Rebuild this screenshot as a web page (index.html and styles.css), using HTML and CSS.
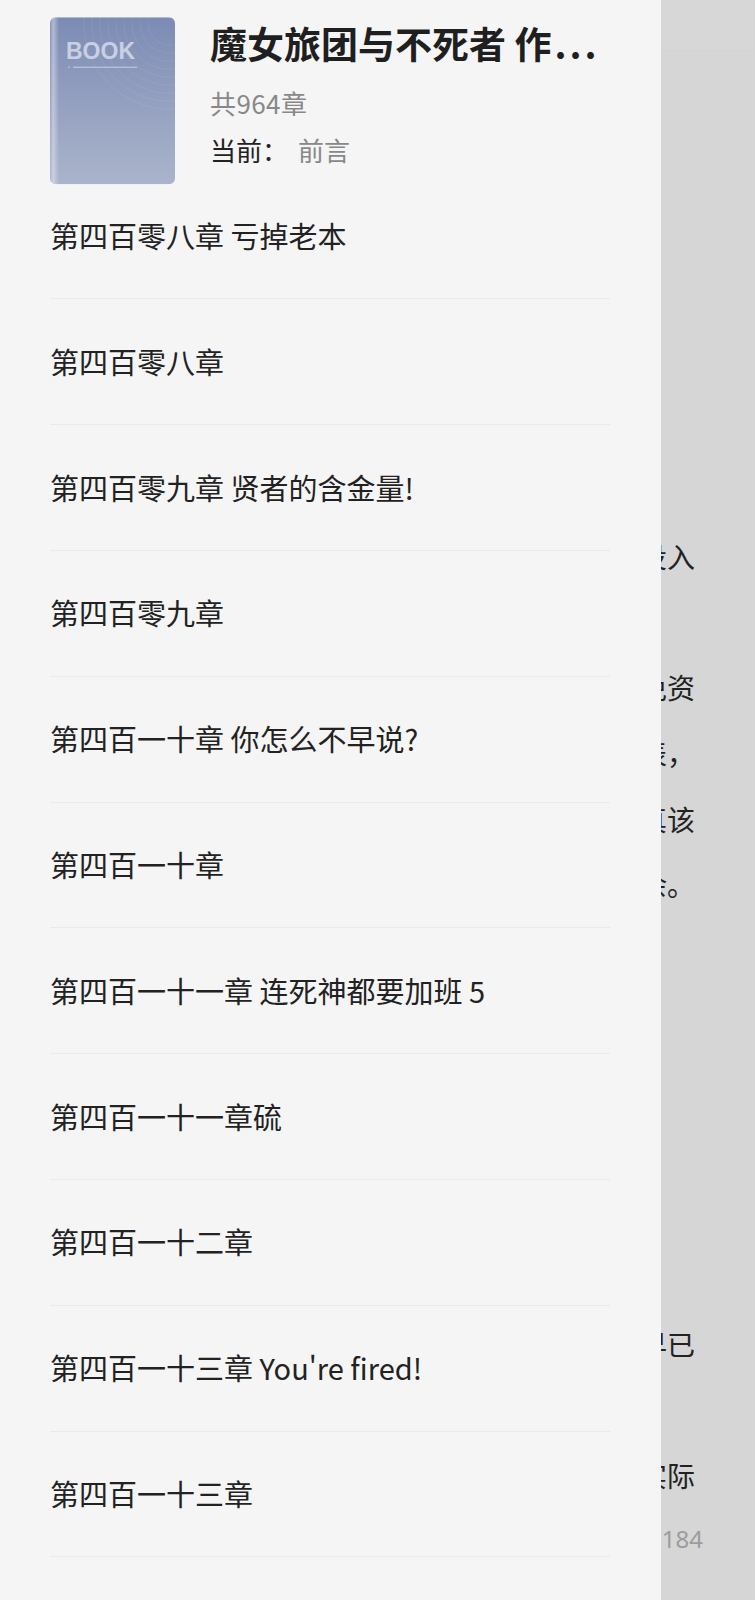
FILE: index.html
```html
<!DOCTYPE html>
<html lang="zh-CN">
<head>
<meta charset="utf-8">
<title>目录</title>
<link rel="stylesheet" href="styles.css">
</head>
<body>
<div class="reader">
  <div class="status"></div>
  <div class="lines">
    <div class="line"></div>
    <div class="line"></div>
    <div class="line"></div>
    <div class="line"></div>
    <div class="line"></div>
    <div class="line"></div>
    <div class="line"></div>
    <div class="line">投入</div>
    <div class="line"></div>
    <div class="line">免资</div>
    <div class="line">表，</div>
    <div class="line">真该</div>
    <div class="line">余。</div>
    <div class="line"></div>
    <div class="line"></div>
    <div class="line"></div>
    <div class="line"></div>
    <div class="line"></div>
    <div class="line"></div>
    <div class="line">早已</div>
    <div class="line"></div>
    <div class="line">实际</div>
  </div>
  <div class="pageno">184</div>
</div>

<aside class="drawer">
  <header class="head">
    <svg class="cover" viewBox="0 0 125 167" width="125" height="167">
      <defs>
        <linearGradient id="cg" x1="0" y1="0" x2="0" y2="1">
          <stop offset="0" stop-color="#7c8bb4"/>
          <stop offset="1" stop-color="#aab4cb"/>
        </linearGradient>
        <linearGradient id="sp" x1="0" y1="0" x2="1" y2="0">
          <stop offset="0" stop-color="#ffffff" stop-opacity="0.05"/>
          <stop offset="0.35" stop-color="#ffffff" stop-opacity="0.4"/>
          <stop offset="1" stop-color="#ffffff" stop-opacity="0"/>
        </linearGradient>
        <clipPath id="cc"><rect width="125" height="167" rx="6"/></clipPath>
      </defs>
      <g clip-path="url(#cc)">
        <rect width="125" height="167" fill="url(#cg)"/>
        <g fill="none" stroke="#ffffff" stroke-opacity="0.1" stroke-width="0.8">
          <circle cx="120" cy="6" r="22"/>
          <circle cx="120" cy="6" r="30"/>
          <circle cx="120" cy="6" r="38"/>
          <circle cx="120" cy="6" r="46"/>
          <circle cx="120" cy="6" r="54"/>
          <circle cx="120" cy="6" r="62"/>
          <circle cx="120" cy="6" r="70"/>
          <circle cx="120" cy="6" r="78"/>
          <circle cx="120" cy="6" r="86"/>
        </g>
        <rect x="0" y="0" width="9" height="167" fill="url(#sp)"/>
      </g>
      <text x="16" y="42" font-family="Liberation Sans, Arial, sans-serif" font-weight="700" font-size="23" fill="#c9d0e2">BOOK</text>
      <circle cx="19" cy="50" r="0.8" fill="#c9d0e2"/>
      <rect x="23" y="49.5" width="64" height="1" fill="#c9d0e2"/>
    </svg>
    <div class="info">
      <div class="title">魔女旅团与不死者 作<span class="dots">...</span></div>
      <div class="count">共964章</div>
      <div class="current">当前：<span class="now">前言</span></div>
    </div>
  </header>
  <ul class="chapters">
    <li class="chapter">第四百零八章 亏掉老本</li>
    <li class="chapter">第四百零八章</li>
    <li class="chapter">第四百零九章 贤者的含金量!</li>
    <li class="chapter">第四百零九章</li>
    <li class="chapter">第四百一十章 你怎么不早说?</li>
    <li class="chapter">第四百一十章</li>
    <li class="chapter">第四百一十一章 连死神都要加班 5</li>
    <li class="chapter">第四百一十一章硫</li>
    <li class="chapter">第四百一十二章</li>
    <li class="chapter">第四百一十三章 You're fired!</li>
    <li class="chapter">第四百一十三章</li>
  </ul>
</aside>
</body>
</html>
```

FILE: styles.css
```css
html, body {
  margin: 0;
  padding: 0;
}
body {
  width: 755px;
  height: 1600px;
  overflow: hidden;
  background: #d6d6d6;
  font-family: "Noto Sans CJK SC", "Noto Sans", sans-serif;
  color: #222;
}

/* reading page under the drawer */
.reader {
  padding: 0 60px 0 50px;
}
.status {
  height: 50px;
  margin: 0 -60px 0 -50px;
  background: #d7d7d7;
  border-bottom: 1px solid #d4d4d4;
}
.lines {
  padding-top: 13.6px;
}
.line {
  height: 65.65px;
  line-height: 65.65px;
  font-size: 28px;
  color: #222;
  white-space: nowrap;
  text-align: right;
}
.pageno {
  height: 60px;
  line-height: 60px;
  margin-right: -8px;
  text-align: right;
  font-family: "Noto Sans", sans-serif;
  font-size: 24px;
  color: #9c9c9c;
}

/* table-of-contents drawer */
.drawer {
  position: fixed;
  top: 0;
  left: 0;
  width: 661px;
  height: 1600px;
  box-sizing: border-box;
  padding: 0 51px 0 50px;
  background: #f5f5f5;
  overflow: hidden;
}
.head {
  display: flex;
  align-items: flex-start;
  height: 173.6px;
  padding-top: 17px;
  box-sizing: border-box;
}
.cover {
  flex: none;
  display: block;
  width: 125px;
  height: 167.5px;
}
.info {
  flex: 1;
  min-width: 0;
  margin-left: 35px;
}
.title {
  margin-top: 2px;
  font-size: 37px;
  font-weight: 700;
  line-height: 48px;
  color: #1f1f1f;
  white-space: nowrap;
}
.title .dots {
  margin-left: 3px;
  letter-spacing: 3px;
}
.count {
  margin-top: 18px;
  font-size: 26px;
  line-height: 36px;
  color: #888;
  letter-spacing: 0.4px;
}
.current {
  margin-top: 11px;
  font-size: 26px;
  line-height: 36px;
  color: #222;
}
.current .now {
  margin-left: 10px;
  color: #888;
}

.chapters {
  list-style: none;
  margin: 0;
  padding: 0;
}
.chapter {
  display: flex;
  align-items: center;
  height: 125.8px;
  border-bottom: 1px solid #eaeaea;
  font-size: 29px;
  line-height: 40px;
  padding-bottom: 2px;
  box-sizing: border-box;
  color: #222;
  white-space: nowrap;
}
```
